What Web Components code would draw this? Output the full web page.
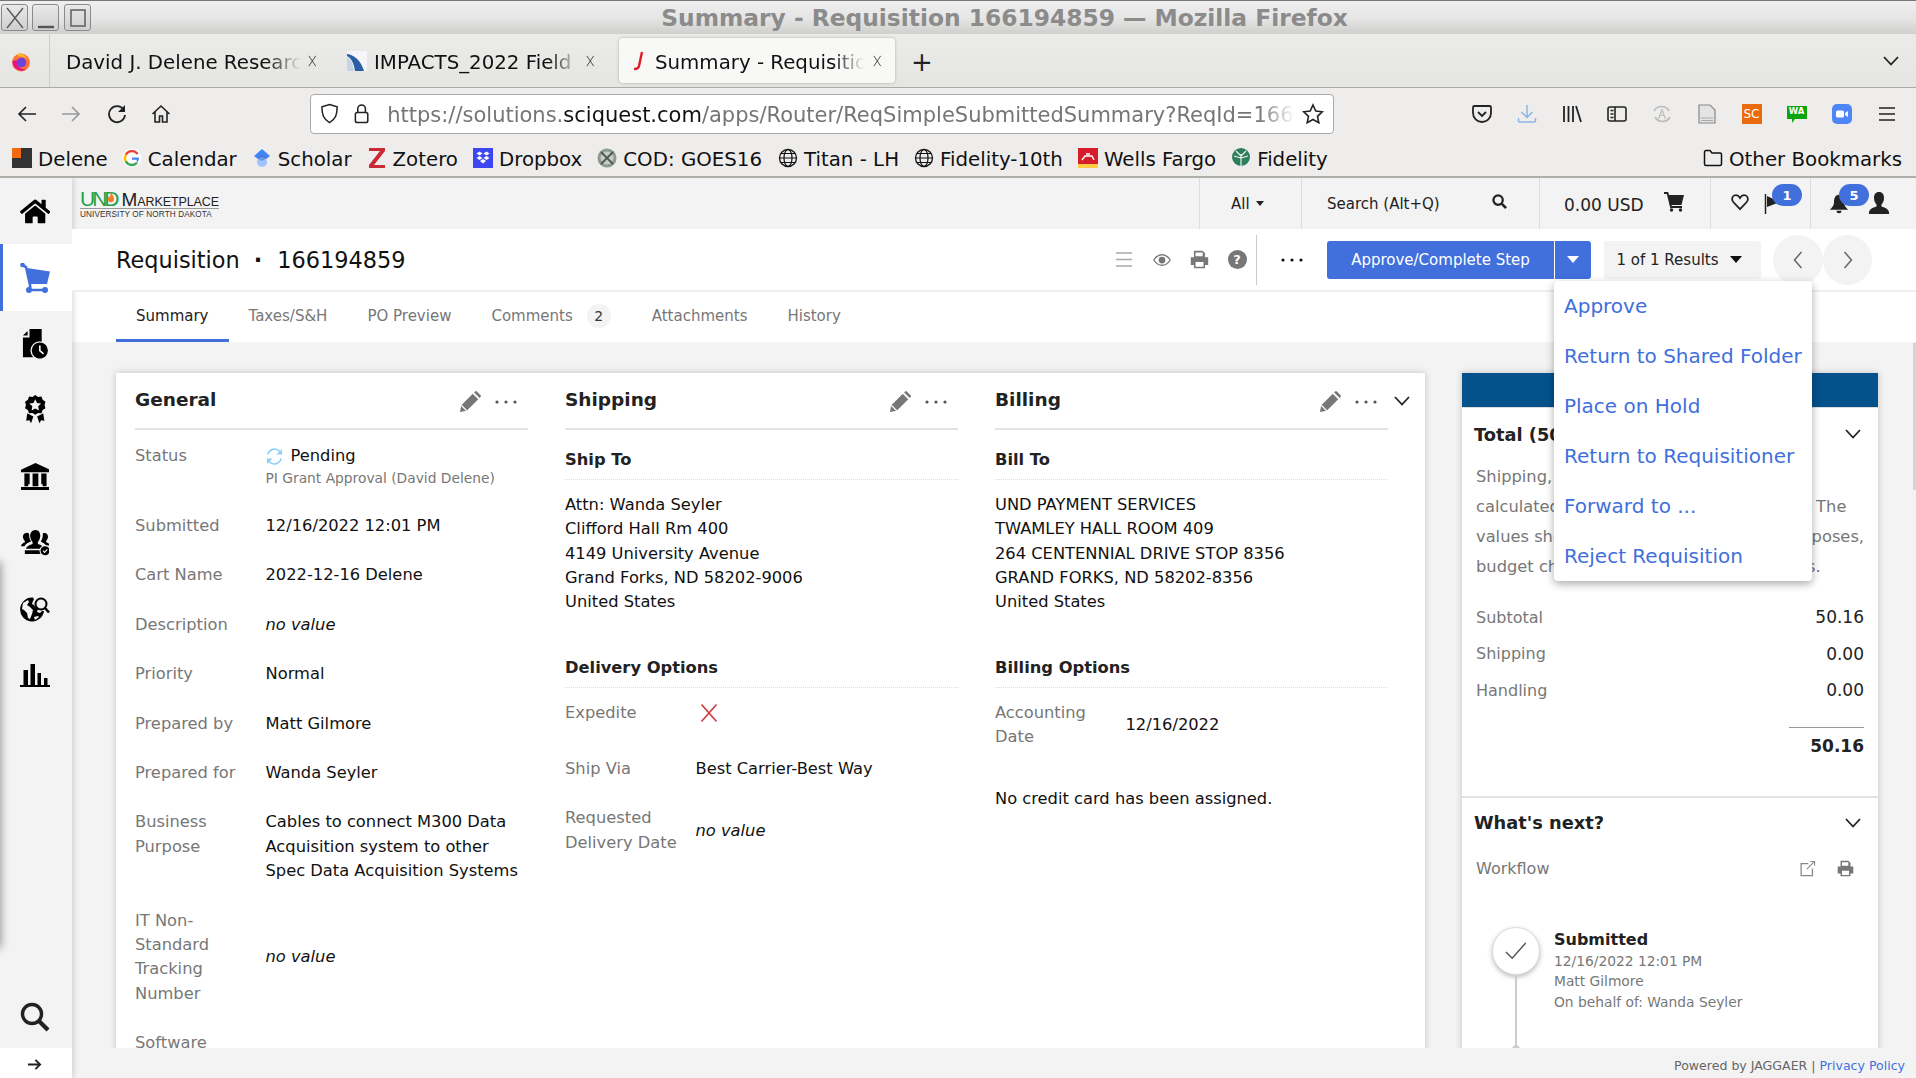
<!DOCTYPE html>
<html lang="en">
<head>
<meta charset="utf-8">
<title>Summary - Requisition 166194859</title>
<style>
  html, body { margin: 0; height: 100%; overflow: hidden; }
  body { font-family: "DejaVu Sans", sans-serif; font-size: 16.3px; color: #222; }
</style>
</head>
<body>
<moz-window>
  <win-titlebar>Summary - Requisition 166194859 — Mozilla Firefox</win-titlebar>
  <ff-tabs></ff-tabs>
  <ff-nav></ff-nav>
  <ff-bookmarks></ff-bookmarks>
  <app-shell>
    <app-sidebar slot="side"></app-sidebar>
    <app-header></app-header>
    <req-header></req-header>
    <req-tabs></req-tabs>
    <scroll-area>
      <summary-card>
        <card-column heading="General">
          <field-row label="Status">
            <status-pending></status-pending>
          </field-row>
          <field-row label="Submitted">12/16/2022 12:01 PM</field-row>
          <field-row label="Cart Name">2022-12-16 Delene</field-row>
          <field-row label="Description"><i>no value</i></field-row>
          <field-row label="Priority">Normal</field-row>
          <field-row label="Prepared by">Matt Gilmore</field-row>
          <field-row label="Prepared for">Wanda Seyler</field-row>
          <field-row label="Business Purpose">Cables to connect M300 Data Acquisition system to other Spec Data Acquisition Systems</field-row>
          <field-row label="IT Non-Standard Tracking Number" center><i>no value</i></field-row>
          <field-row label="Software"></field-row>
        </card-column>
        <card-column heading="Shipping">
          <sub-section heading="Ship To" first>
            Attn: Wanda Seyler<br>Clifford Hall Rm 400<br>4149 University Avenue<br>Grand Forks, ND 58202-9006<br>United States
          </sub-section>
          <sub-section heading="Delivery Options">
            <field-row label="Expedite"><x-icon name="cross" size="20" style="color:#d0393b;margin:2px 0 0 3px;padding-bottom:9px"></x-icon></field-row>
            <field-row label="Ship Via">Best Carrier-Best Way</field-row>
            <field-row label="Requested Delivery Date" center><i>no value</i></field-row>
          </sub-section>
        </card-column>
        <card-column heading="Billing">
          <sub-section heading="Bill To" first>
            UND PAYMENT SERVICES<br>TWAMLEY HALL ROOM 409<br>264 CENTENNIAL DRIVE STOP 8356<br>GRAND FORKS, ND 58202-8356<br>United States
          </sub-section>
          <sub-section heading="Billing Options">
            <field-row label="Accounting Date" center>12/16/2022</field-row>
            <div style="margin-top:37px">No credit card has been assigned.</div>
          </sub-section>
        </card-column>
      </summary-card>
      <totals-panel></totals-panel>
    </scroll-area>
    <app-footer></app-footer>
  </app-shell>
</moz-window>

<script>
// icon paths, all drawn with currentColor
const ICONS = {
  home: ['0 0 576 512', '<path fill="currentColor" d="M280.37 148.26L96 300.11V464a16 16 0 0 0 16 16l112.06-.29a16 16 0 0 0 15.92-16V368a16 16 0 0 1 16-16h64a16 16 0 0 1 16 16v95.64a16 16 0 0 0 16 16.05L464 480a16 16 0 0 0 16-16V300L295.67 148.26a12.19 12.19 0 0 0-15.3 0zM571.6 251.47L488 182.56V44.05a12 12 0 0 0-12-12h-56a12 12 0 0 0-12 12v72.61L318.47 43a48 48 0 0 0-61 0L4.34 251.47a12 12 0 0 0-1.6 16.9l25.5 31A12 12 0 0 0 45.15 301l235.22-193.74a12.19 12.19 0 0 1 15.3 0L530.9 301a12 12 0 0 0 16.9-1.6l25.5-31a12 12 0 0 0-1.7-16.93z"/>'],
  cart: ['0 0 30 30', '<path fill="currentColor" d="M7 5l23 3.5-3 12.5H10z"/><path d="M1.5 1.5L6 4l4 18 .5 5M9 27h16" fill="none" stroke="currentColor" stroke-width="2.6"/><circle cx="2.5" cy="2" r="2.3" fill="currentColor"/><circle cx="9" cy="27" r="3" fill="currentColor"/><circle cx="25" cy="27" r="3" fill="currentColor"/>'],
  docclock: ['0 0 28 32', '<path fill="currentColor" d="M1 7l5-5v5zM1 9h7V0h13v30H1z"/><circle cx="19" cy="23" r="10" fill="#f3f3f3"/><circle cx="19" cy="23" r="8.6" fill="currentColor"/><path d="M19 17.5V23l4 3.5" fill="none" stroke="#f3f3f3" stroke-width="1.8"/>'],
  award: ['0 0 24 32', '<path fill="currentColor" d="M12 0l3 2 3.6-.3 1.3 3.4 3 2-1 3.5 1 3.4-3 2-1.3 3.4-3.6-.3-3 2-3-2-3.6.3L4.1 16l-3-2 1-3.4-1-3.500 3-2 1.300-3.400L9 2z"/><path fill="#f3f3f3" d="M12 4.500l1.900 4 4.400.6-3.200 3 .8 4.300-3.900-2.100-3.900 2.100.8-4.300-3.200-3 4.400-.6z"/><path fill="currentColor" d="M3.500 19.500l5 2.500 1.500 1-2.500 7-1.700-3-3.500.5zM20.500 19.500l-5 2.500-1.500 1 2.500 7 1.700-3 3.500.5z"/>'],
  bank: ['0 0 30 28', '<path fill="currentColor" d="M15 0L30 7v2.500H0V7zM3.500 11H9v11H7.500v2H3.500zM12 11h6v13h-6zM21 11h5.500v13H22.500v-2H21zM0 25h30v3H0z"/>'],
  users: ['0 0 30 28', '<path fill="currentColor" d="M15 1c3.500 0 5 3 5 6 0 3-1.500 5.500-2.500 6.500v2c3 1 6 2 7 5H5c1-3 4-4 7-5v-2C11 12.500 9.500 10 9.500 7s2-6 5.500-6zM6.500 4C8 4 8.500 5 8.500 7c0 2.500 1 4.500 2 6-3 1-5.500 2-7 5H0c0-2.500 2.500-3.500 4-4.200v-1.300C3 11.500 2 9.500 2 8c0-2.500 2-4 4.500-4zM23.500 4C26 4 28 5.500 28 8c0 1.500-1 3.500-2 4.500v1c1.500.7 4 1.700 4 3.500h-4c-1.500-2-4-3.200-5.500-4 1-1.500 2-3.500 2-6 0-2 .5-3 1.500-3zM4 22h17v4H4z"/><circle cx="25" cy="22.500" r="5.800" fill="#f3f3f3"/><circle cx="25" cy="22.500" r="4.700" fill="currentColor"/><path d="M22.800 22.500l1.700 1.700 2.800-3" stroke="#f3f3f3" stroke-width="1.200" fill="none"/>'],
  globesearch: ['0 0 30 26', '<path fill="currentColor" d="M12 1.500A12 12 0 1 0 24 15h-2l-2 2-3-1 1-3a8 8 0 0 1-4-4l-2-1 1-3 1-1.500-1-2zM3 7l5-3 1 2-2 3 3 2 3 3-1 4-2 5-2-1-1-5-3-3-2-1zM14 21l4-1 1 1-4 3z"/><circle cx="21" cy="8" r="5.500" fill="none" stroke="currentColor" stroke-width="2"/><path d="M25 12l4 4.500" stroke="currentColor" stroke-width="2.600"/>'],
  chart: ['0 0 30 23', '<path fill="currentColor" d="M3.500 6h4.500v15H3.500zM10.500 0h4.500v21h-4.500zM17.500 9h3.500v12h-3.500zM24 14h3.500v7H24zM0 21h30v2H0z"/>'],
  search: ['0 0 30 30', '<circle cx="12" cy="12" r="9.500" fill="none" stroke="currentColor" stroke-width="3.400"/><path d="M19 19l9 9" stroke="currentColor" stroke-width="4.200"/>'],
  arrow: ['0 0 16 16', '<path d="M1 8h13M9 3l5 5-5 5" fill="none" stroke="currentColor" stroke-width="2"/>'],
  pencil: ['0 0 24 24', '<path fill="currentColor" d="M1 23l1.500-7.500L15 3l6 6L8.500 21.500zM16.500 1.500L17.500.500a1.500 1.500 0 0 1 2 0l4 4a1.500 1.500 0 0 1 0 2L22.500 7.500z"/><path d="M2.500 15.500l6 6" stroke="#fff" stroke-width="1.300"/>'],
  dots: ['0 0 22 4', '<circle cx="2" cy="2" r="1.600" fill="currentColor"/><circle cx="11" cy="2" r="1.600" fill="currentColor"/><circle cx="20" cy="2" r="1.600" fill="currentColor"/>'],
  close: ['0 0 10 14', '<path d="M1 1l8 12M9 1L1 13" stroke="currentColor" stroke-width="1" fill="none"/>'],
  printer: ['0 0 24 24', '<path fill="currentColor" d="M5 1h11l3 3v6H5zM1 9h22v10h-4v4H5v-4H1z"/><path fill="#fff" d="M7 3h9v5H7zM7 15h10v6H7z"/>'],
  eye: ['0 0 24 24', '<path d="M1 12c3-4.500 7-7 11-7s8 2.500 11 7c-3 4.500-7 7-11 7s-8-2.500-11-7z" fill="none" stroke="currentColor" stroke-width="1.700"/><circle cx="12" cy="12" r="4.500" fill="currentColor"/>'],
  lines: ['0 0 18 16', '<path d="M0 1h18M0 8h18M0 15h18" stroke="currentColor" stroke-width="1.700"/>'],
  external: ['0 0 24 24', '<path d="M13 5H3v17h16V12" fill="none" stroke="currentColor" stroke-width="1.800"/><path d="M11 13L22 2M16 2h6v6" fill="none" stroke="currentColor" stroke-width="1.500"/>'],
  chevron: ['0 0 16 10', '<path d="M1 1l7 7.500L15 1" fill="none" stroke="currentColor" stroke-width="1.800"/>'],
  left: ['0 0 10 18', '<path d="M8.500 1L1.500 9l7 8" fill="none" stroke="currentColor" stroke-width="1.500"/>'],
  right: ['0 0 10 18', '<path d="M1.500 1l7 8-7 8" fill="none" stroke="currentColor" stroke-width="1.500"/>'],
  cross: ['0 0 20 20', '<path d="M2.500 1.500l15 17M17.500 1.500l-15 17" fill="none" stroke="currentColor" stroke-width="1.600"/>'],
  sync: ['0 0 18 18', '<path d="M2 7a7.300 7.300 0 0 1 12.500-3.500L16 5M16 11a7.300 7.300 0 0 1-12.500 3.500L2 13" fill="none" stroke="currentColor" stroke-width="1.700"/><path fill="currentColor" d="M17 1v6h-6zM1 17v-6h6z"/>'],
  check: ['0 0 24 20', '<path d="M1 11l7 7L23 1" fill="none" stroke="currentColor" stroke-width="1.600"/>'],
  // header
  magnify: ['0 0 16 16', '<circle cx="6.500" cy="6.500" r="5" fill="none" stroke="currentColor" stroke-width="2.400"/><path d="M10.500 10.500l4.500 4.500" stroke="currentColor" stroke-width="2.800"/>'],
  shopcart: ['0 0 20 20', '<path fill="currentColor" d="M4 3h16l-2.500 10H6z"/><path d="M0 1h3.500L7 15h11" fill="none" stroke="currentColor" stroke-width="1.800"/><circle cx="7.500" cy="18" r="1.700" fill="currentColor"/><circle cx="16.500" cy="18" r="1.700" fill="currentColor"/>'],
  heart: ['0 0 20 20', '<path d="M10 18L2.500 10C.5 7.500 1 4 3.500 2.800 6 1.700 8.500 3 10 5.500 11.500 3 14 1.700 16.500 2.800 19 4 19.500 7.500 17.500 10z" fill="none" stroke="currentColor" stroke-width="2"/>'],
  flag: ['0 0 20 20', '<path d="M1.500 0v20" stroke="currentColor" stroke-width="1.500"/><path fill="currentColor" d="M3 2l13 6-13 5z"/>'],
  bell: ['0 0 24 24', '<path fill="currentColor" d="M12 1c5 0 6 5 6 9 0 4 2 6 5 9H1c3-3 5-5 5-9 0-4 1-9 6-9zM9 20h6a3 3 0 0 1-6 0z"/>'],
  user: ['0 0 20 22', '<path fill="currentColor" d="M10 0c3.500 0 5 2.500 5 6 0 3-1.500 5.500-2.500 6.500v2c3 1 6.500 2 7.500 5.500v2H0v-2c1-3.500 4.500-4.500 7.500-5.500v-2C6.500 11.500 5 9 5 6c0-3.500 1.500-6 5-6z"/>'],
  flame: ['0 0 10 14', '<path fill="#ef7d2b" d="M5 0c1 3 4 5 4 9a4 4 0 0 1-8 0c0-2 1-3 2-4 0 1 .5 2 1 2C4.500 5 4 2 5 0z"/>'],
  // browser chrome
  back: ['0 0 20 20', '<path d="M19 10H2M9 3l-7 7 7 7" fill="none" stroke="currentColor" stroke-width="1.600"/>'],
  forward: ['0 0 20 20', '<path d="M1 10h17M11 3l7 7-7 7" fill="none" stroke="currentColor" stroke-width="1.600"/>'],
  reload: ['0 0 20 20', '<path d="M16.500 5.500A8 8 0 1 0 18 11" fill="none" stroke="currentColor" stroke-width="1.800"/><path fill="currentColor" d="M18 1v7h-7z"/>'],
  house: ['0 0 20 20', '<path d="M1.500 10L10 2l8.500 8M4 8v10h4.500v-6h3v6H16V8" fill="none" stroke="currentColor" stroke-width="1.600"/>'],
  shield: ['0 0 20 22', '<path d="M10 1.500l8 2.500c0 8-1.500 13-8 16.500C3.500 17 2 12 2 4z" fill="none" stroke="currentColor" stroke-width="1.600"/>'],
  lock: ['0 0 18 22', '<path d="M5 10V6a4 4 0 0 1 8 0v4" fill="none" stroke="currentColor" stroke-width="1.600"/><rect x="2.500" y="10" width="13" height="10.500" rx="2" fill="none" stroke="currentColor" stroke-width="1.600"/>'],
  star: ['0 0 22 22', '<path d="M11 2l2.800 6 6.500.8-4.800 4.500 1.300 6.500L11 16.500 5.200 19.800l1.300-6.500L1.700 8.800 8.200 8z" fill="none" stroke="currentColor" stroke-width="1.600"/>'],
  pocket: ['0 0 20 20', '<path d="M2.500 2h15a1.500 1.500 0 0 1 1.500 1.500V9a9 9 0 0 1-18 0V3.500A1.500 1.500 0 0 1 2.500 2z" fill="none" stroke="currentColor" stroke-width="1.800"/><path d="M6 8l4 4 4-4" fill="none" stroke="currentColor" stroke-width="1.800"/>'],
  download: ['0 0 20 20', '<path d="M10 1v12M4.500 8l5.500 5.500L15.500 8M1.500 14v3a1 1 0 0 0 1 1h15a1 1 0 0 0 1-1v-3" fill="none" stroke="currentColor" stroke-width="1.500"/>'],
  library: ['0 0 20 20', '<path d="M2 2v16M6.500 2v16M11 2v16M14 2l5 16" fill="none" stroke="currentColor" stroke-width="1.800"/>'],
  sidebar: ['0 0 20 20', '<rect x="1" y="3" width="18" height="14" rx="2" fill="none" stroke="currentColor" stroke-width="1.600"/><path d="M8 3v14" stroke="currentColor" stroke-width="1.600"/><path d="M3.500 6.500h3M3.500 10h3M3.500 13.500h3" stroke="currentColor" stroke-width="1.500"/>'],
  syncA: ['0 0 20 20', '<path d="M2 7a8.500 8.500 0 0 1 15 0M18 13a8.500 8.500 0 0 1-15 0" fill="none" stroke="currentColor" stroke-width="1.600"/><path d="M6.500 15L10 5.500 13.500 15M8 11.500h4" fill="none" stroke="currentColor" stroke-width="1.100"/>'],
  page: ['0 0 18 20', '<path d="M1 1h11l5 5v13H1z" fill="#e4e4e4" stroke="#888" stroke-width="1.200"/><path d="M3 14h12M3 16.500h12" stroke="#aaa" stroke-width="1"/>'],
  menu: ['0 0 20 20', '<path d="M2 4h16M2 10h16M2 16h16" stroke="currentColor" stroke-width="1.700"/>'],
  globe: ['0 0 20 20', '<circle cx="10" cy="10" r="8.500" fill="none" stroke="currentColor" stroke-width="1.300"/><ellipse cx="10" cy="10" rx="4" ry="8.500" fill="none" stroke="currentColor" stroke-width="1.200"/><path d="M1.500 10h17M3 5.500h14M3 14.500h14" stroke="currentColor" stroke-width="1.100"/>'],
  folder: ['0 0 20 18', '<path d="M1.500 15V3a1.500 1.500 0 0 1 1.500-1.500h4L9 4h8a1.500 1.500 0 0 1 1.500 1.500V15a1.500 1.500 0 0 1-1.500 1.500H3A1.500 1.500 0 0 1 1.500 15z" fill="none" stroke="currentColor" stroke-width="1.500"/>'],
  // favicons
  delene: ['0 0 20 20', '<rect width="20" height="20" fill="#333"/><rect width="9" height="10" fill="#f26a0f"/>'],
  google: ['0 0 20 20', '<circle cx="10" cy="10" r="9.500" fill="#fff"/><path d="M15.600 6A7 7 0 0 0 3.800 6.700" fill="none" stroke="#ea4335" stroke-width="2.400"/><path d="M3.800 6.700a7 7 0 0 0 0 6.600" fill="none" stroke="#fbbc05" stroke-width="2.400"/><path d="M3.800 13.300a7 7 0 0 0 11.200 1.600" fill="none" stroke="#34a853" stroke-width="2.400"/><path d="M15 14.900A7 7 0 0 0 17 9.500H10v2.200h4.500" fill="#4285f4"/>'],
  scholar: ['0 0 20 20', '<path fill="#4285f4" d="M10 1l8 7-8 6-8-6z"/><circle cx="10" cy="14" r="5" fill="#a0c3ff"/><path fill="#356ac3" d="M5 10l5-3 5 3-5 3z" opacity=".5"/>'],
  zotero: ['0 0 20 20', '<path fill="#cc2936" d="M2 0h16v3L7 17h11v3H2v-3L13 3H2z"/>'],
  dropbox: ['0 0 20 20', '<rect width="20" height="20" fill="#3d46f2"/><path fill="#fff" d="M6.500 3.500l3 2-3 2-3-2zM13.500 3.500l3 2-3 2-3-2zM6.500 8l3 2-3 2-3-2zM13.500 8l3 2-3 2-3-2zM10 11l3 2-3 2.500-3-2.500z"/>'],
  cod: ['0 0 20 20', '<circle cx="10" cy="10" r="9.500" fill="#8d9a8f"/><circle cx="10" cy="10" r="6.500" fill="#c6cdc6"/><path d="M4 4l12 12M16 4L4 16" stroke="#4d5a50" stroke-width="1.800"/>'],
  wells: ['0 0 20 20', '<rect width="20" height="16" fill="#d71e28"/><rect y="16" width="20" height="4" fill="#ffcd41"/><path d="M4 12l3-4h7l2 4M8 6h4" stroke="#fff" stroke-width="1.400" fill="none"/>'],
  fidelity: ['0 0 20 20', '<circle cx="10" cy="9" r="9" fill="#2e7d5b"/><path d="M10 6v14M10 8L5 3M10 8l5-5M10 10L3 8M10 10l7-2" stroke="#e8f2ee" stroke-width="1.200"/>'],
  firefox: ['0 0 20 20', '<circle cx="10" cy="10.500" r="9" fill="#ff7139"/><path fill="#e31587" d="M1.500 9a9 9 0 0 0 14 8C9 18 5 13 6 8z"/><circle cx="10.500" cy="10.500" r="4.800" fill="#6e44d8"/><path fill="#ffbd2e" d="M7 1c4 0 8 3 9 6-2-2-5-3-9-2z"/>'],
  impacts: ['0 0 20 20', '<rect width="20" height="20" fill="#f4f6fa"/><path d="M0 3c8 1 14 7 17 17H8C7 12 4 7 0 5z" fill="#2a5fa4"/><path d="M0 6c4 2 6 6 7 14H0z" fill="#c7d4e8"/>'],
  jaggaer: ['0 0 14 20', '<path d="M10 1L7 15c-.4 2-2 3-5 3" fill="none" stroke="#e01b24" stroke-width="2.400"/>'],
  zoomapp: ['0 0 20 20', '<rect width="20" height="20" rx="5" fill="#4f86f7"/><rect x="4" y="6.500" width="8" height="7" rx="1.500" fill="#fff"/><path fill="#fff" d="M13 9l3-2v6l-3-2z"/>'],
  wa: ['0 0 20 20', '<path fill="#0da50d" d="M0 2h20v13H8l-3 4v-4H0z"/>']
};

// small helper, every element just clones its template into an open shadow root
function define(name, html, init) {
  const template = document.createElement('template');
  template.innerHTML = html;
  customElements.define(name, class extends HTMLElement {
    constructor() {
      super();
      this.attachShadow({ mode: 'open' });
      this.shadowRoot.appendChild(template.content.cloneNode(true));
      if (init) init(this, this.shadowRoot);
    }
  });
}

class XIcon extends HTMLElement {
  constructor() {
    super();
    this.attachShadow({ mode: 'open' });
  }
  connectedCallback() {
    const [box, body] = ICONS[this.getAttribute('name')];
    const parts = box.split(' ');
    const h = Number(this.getAttribute('size') || 20);
    const w = this.getAttribute('width') || h * parts[2] / parts[3];
    this.shadowRoot.innerHTML = `<style>:host{display:inline-flex;flex:none;line-height:0}</style>
      <svg xmlns="http://www.w3.org/2000/svg" viewBox="${box}" width="${w}" height="${h}">${body}</svg>`;
  }
}
customElements.define('x-icon', XIcon);

define('moz-window', `<style>
  :host { display: flex; flex-direction: column; width: 1916px; height: 1078px; overflow: hidden; background: #ececea; }
</style><slot></slot>`);

define('win-titlebar', `<style>
  :host { display: flex; align-items: center; height: 33px; flex: none; position: relative; border-top: 1px solid #777;
    background: linear-gradient(#efefef, #e6e6e6 50%, #cfcfcd); }
  .btns { display: flex; gap: 4px; padding-left: 1px; }
  .btn { width: 27px; height: 27px; box-sizing: border-box; border: 1px solid #8a8a8a; border-radius: 3px; background: linear-gradient(#e9e9e9, #cfcfcf); display: flex; align-items: center; justify-content: center; }
  .t { flex: 1; text-align: center; font: bold 23.350px "DejaVu Sans", sans-serif; color: #8b8b8b; white-space: nowrap; padding-left: 2px; }
</style>
<div class="btns">
  <div class="btn"><svg width="20" height="22"><path d="M2 1l16 20M18 1L2 21" stroke="#555" stroke-width="1.300" fill="none"/></svg></div>
  <div class="btn"><svg width="20" height="22"><path d="M2 20h16" stroke="#555" stroke-width="2.400"/></svg></div>
  <div class="btn" style="margin-left:1px"><svg width="20" height="22"><rect x="3" y="3" width="14" height="16" fill="none" stroke="#666" stroke-width="1.600"/></svg></div>
</div>
<div class="t"><slot></slot></div>`);

define('ff-tab', `<style>
  :host { display: flex; align-items: center; height: 45px; width: 276px; flex: none; box-sizing: border-box; padding: 0 10px 0 15px; gap: 7px; font-size: 19.800px; color: #111; border-radius: 4px; }
  :host([active]) { background: #f8f8f7; box-shadow: 0 0 3px #0004; padding: 0 13px 0 13px; gap: 9px; }
  .l { flex: 1; overflow: hidden; white-space: nowrap; padding-top: 3px; -webkit-mask-image: linear-gradient(90deg, #000 85%, transparent); mask-image: linear-gradient(90deg, #000 85%, transparent); }
  .x { color: #333; margin-top: 1px; }
</style><slot name="icon"></slot><span class="l"><slot></slot></span><x-icon class="x" name="close" size="12"></x-icon>`);

define('ff-tabs', `<style>
  :host { display: flex; align-items: center; height: 54px; flex: none; box-sizing: border-box; border-bottom: 1px solid #aaa; background: linear-gradient(#ebebe9, #e5e5e3); }
  .ff { width: 50px; height: 100%; display: flex; align-items: center; justify-content: center; border-right: 1px solid #ccc; box-sizing: border-box; margin-right: 1px; padding: 3px 8px 0 0; }
  .plus { font-size: 26px; margin-left: 16px; color: #222; padding-top: 2px; }
  .more { margin-left: auto; margin-right: 17px; color: #222; }
</style>
<div class="ff"><x-icon name="firefox" size="20"></x-icon></div>
<ff-tab>David J. Delene Research Group</ff-tab>
<ff-tab style="margin:0 14px 0 0;width:278px;padding-left:20px"><x-icon slot="icon" name="impacts" size="20"></x-icon>IMPACTS_2022 Field Catalog</ff-tab>
<ff-tab active><x-icon slot="icon" name="jaggaer" size="20"></x-icon>Summary - Requisition 166194859</ff-tab>
<span class="plus">+</span>
<x-icon class="more" name="chevron" size="10"></x-icon>`);

define('ff-nav', `<style>
  :host { display: flex; align-items: center; height: 52px; flex: none; background: #eeedec; }
  .b { width: 44px; display: flex; justify-content: center; color: #222; }
  .left { display: flex; padding-left: 5px; width: 310px; box-sizing: border-box; }
  .url { width: 1024px; height: 40px; box-sizing: border-box; margin-top: -1px; background: #fff; border: 1px solid #aaa; border-radius: 4px; display: flex; align-items: center; color: #222; padding: 0 9px 0 9px; font-size: 21px; }
  .txt { flex: 1; margin-left: 17px; padding-top: 2px; overflow: hidden; white-space: nowrap; color: #757575; -webkit-mask-image: linear-gradient(90deg, #000 96%, transparent); mask-image: linear-gradient(90deg, #000 96%, transparent); }
  .txt b { font-weight: normal; color: #111; }
  .tools { flex: 1; display: flex; justify-content: flex-end; padding-right: 7px; }
  .t { width: 45px; display: flex; justify-content: center; align-items: center; color: #222; }
  .sc { width: 20px; height: 20px; background: #ea6a0e; color: #fff; font-size: 12px; display: flex; align-items: center; justify-content: center; }
  .wa { position: relative; width: 20px; height: 20px; }
  .wa span { position: absolute; left: 0; right: 0; top: 2px; text-align: center; font-size: 8.500px; font-weight: bold; color: #fff; }
</style>
<div class="left">
  <div class="b"><x-icon name="back" size="20"></x-icon></div>
  <div class="b" style="color:#999"><x-icon name="forward" size="20"></x-icon></div>
  <div class="b" style="margin-left:2px"><x-icon name="reload" size="20"></x-icon></div>
  <div class="b"><x-icon name="house" size="20"></x-icon></div>
</div>
<div class="url">
  <x-icon name="shield" size="21"></x-icon>
  <x-icon name="lock" size="21" style="margin-left:14px"></x-icon>
  <div class="txt">https://solutions.<b>sciquest.com</b>/apps/Router/ReqSimpleSubmittedSummary?ReqId=166194859</div>
  <x-icon name="star" size="22" style="margin-left:7px"></x-icon>
</div>
<div class="tools">
  <div class="t"><x-icon name="pocket" size="20"></x-icon></div>
  <div class="t" style="color:#8fb4e3"><x-icon name="download" size="20"></x-icon></div>
  <div class="t"><x-icon name="library" size="20"></x-icon></div>
  <div class="t"><x-icon name="sidebar" size="20"></x-icon></div>
  <div class="t" style="color:#bbb"><x-icon name="syncA" size="20"></x-icon></div>
  <div class="t"><x-icon name="page" size="20"></x-icon></div>
  <div class="t"><span class="sc">SC</span></div>
  <div class="t"><span class="wa"><x-icon name="wa" size="20"></x-icon><span>WA</span></span></div>
  <div class="t"><x-icon name="zoomapp" size="20"></x-icon></div>
  <div class="t"><x-icon name="menu" size="20"></x-icon></div>
</div>`);

define('ff-bm', `<style>
  :host { display: inline-flex; align-items: center; gap: 6px; font-size: 19.800px; color: #111; white-space: nowrap; }
  span { padding-top: 2px; }
</style><slot name="icon"></slot><span><slot></slot></span>`);

define('ff-bookmarks', `<style>
  :host { display: flex; align-items: center; gap: 15px; height: 38px; flex: none; box-sizing: border-box; padding: 0 14px 0 12px; background: #eeedec; border-bottom: 2px solid #b0aea9; }
  .end { margin-left: auto; }
</style>
<ff-bm><x-icon slot="icon" name="delene" size="20"></x-icon>Delene</ff-bm>
<ff-bm style="margin-left:-1px"><x-icon slot="icon" name="google" size="20"></x-icon>Calendar</ff-bm>
<ff-bm><x-icon slot="icon" name="scholar" size="20"></x-icon>Scholar</ff-bm>
<ff-bm><x-icon slot="icon" name="zotero" size="20"></x-icon>Zotero</ff-bm>
<ff-bm><x-icon slot="icon" name="dropbox" size="20"></x-icon>Dropbox</ff-bm>
<ff-bm><x-icon slot="icon" name="cod" size="20"></x-icon>COD: GOES16</ff-bm>
<ff-bm style="margin-left:1px"><x-icon slot="icon" name="globe" size="20"></x-icon>Titan - LH</ff-bm>
<ff-bm><x-icon slot="icon" name="globe" size="20"></x-icon>Fidelity-10th</ff-bm>
<ff-bm><x-icon slot="icon" name="wells" size="20"></x-icon>Wells Fargo</ff-bm>
<ff-bm><x-icon slot="icon" name="fidelity" size="20"></x-icon>Fidelity</ff-bm>
<ff-bm class="end"><x-icon slot="icon" name="folder" size="18"></x-icon>Other Bookmarks</ff-bm>`);

define('app-shell', `<style>
  :host { display: grid; grid-template-columns: 72px 1fr; flex: 1; min-height: 0; position: relative; }
  .main { display: flex; flex-direction: column; min-width: 0; min-height: 0; }
  .side { display: flex; z-index: 3; min-height: 0; }
  .bar { position: absolute; right: 0; top: 165px; width: 3px; height: 147px; background: #d4d4d4; z-index: 5; }
</style>
<div class="side"><slot name="side"></slot></div>
<div class="main"><slot></slot></div>
<div class="bar"></div>`);

define('side-item', `<style>
  :host { display: flex; align-items: center; justify-content: center; height: 66.200px; flex: none; color: #000; box-sizing: border-box; padding-right: 2px; }
  :host([active]) { background: #fff; border-left: 3px solid #4170dd; padding-right: 5px; color: #4170dd; height: 67px; }
</style><slot></slot>`);

define('app-sidebar', `<style>
  :host { display: flex; flex-direction: column; width: 72px; background: #f3f3f3; box-shadow: 2px 0 5px #0002; position: relative; overflow: visible; clip-path: inset(0 -10px 0 0); }
  .grow { flex: 1; display: flex; align-items: flex-end; justify-content: center; padding: 0 2px 16px 0; }
  .arrow { height: 30px; flex: none; background: #fff; display: flex; align-items: center; justify-content: center; padding: 3px 4px 0 0; box-sizing: border-box; }
  .shade { position: absolute; left: -6px; top: 385px; width: 6px; height: 384px; box-shadow: 0 0 9px 1px #0006; }
</style>
<side-item><x-icon name="home" size="27"></x-icon></side-item>
<side-item active><x-icon name="cart" size="30"></x-icon></side-item>
<side-item><x-icon name="docclock" size="30"></x-icon></side-item>
<side-item><x-icon name="award" size="30"></x-icon></side-item>
<side-item><x-icon name="bank" size="27"></x-icon></side-item>
<side-item><x-icon name="users" size="27"></x-icon></side-item>
<side-item><x-icon name="globesearch" size="26"></x-icon></side-item>
<side-item><x-icon name="chart" size="23"></x-icon></side-item>
<div class="grow"><x-icon name="search" size="30"></x-icon></div>
<div class="arrow"><x-icon name="arrow" size="15"></x-icon></div>
<div class="shade"></div>`);

define('app-header', `<style>
  :host { display: flex; height: 51px; flex: none; background: #f3f3f3; align-items: stretch; font-size: 15px; color: #222; }
  .logo { width: 1127px; flex: none; box-sizing: border-box; padding: 9px 0 0 8px; }
  .und { display: flex; align-items: baseline; height: 20px; white-space: nowrap; position: relative; }
  .und b { font: 21px "Liberation Sans", sans-serif; color: #1aa34a; letter-spacing: -3px; }
  .und x-icon { position: absolute; left: 27px; top: 5px; }
  .und span { font: 19px "Liberation Sans", sans-serif; color: #222; margin-left: 5px; }
  .und em { font: 12.500px "Liberation Sans", sans-serif; color: #222; letter-spacing: -.1px; }
  .uni { font: 8.200px "Liberation Sans", sans-serif; color: #333; border-top: 1px solid #999; width: 139px; margin-top: 1px; padding-top: 1px; letter-spacing: .1px; white-space: nowrap; }
  .c { display: flex; align-items: center; border-left: 1px solid #ddd; box-sizing: border-box; position: relative; }
  .caret { width: 0; height: 0; border: 4px solid transparent; border-top: 5px solid #222; border-bottom: 0; margin-left: 6px; }
  .badge { position: absolute; width: 30px; height: 22px; border-radius: 11px; background: #4170dd; color: #fff; font-size: 13px; font-weight: bold; display: flex; align-items: center; justify-content: center; }
</style>
<div class="logo">
  <div class="und"><b>UND</b><x-icon name="flame" size="11"></x-icon><span>M</span><em>ARKETPLACE</em></div>
  <div class="uni">UNIVERSITY OF NORTH DAKOTA</div>
</div>
<div class="c" style="width:102px;padding-left:31px">All<span class="caret"></span></div>
<div class="c" style="width:238px;padding-left:25px">Search (Alt+Q)<x-icon name="magnify" size="15" style="margin-left:52px;margin-top:-4px"></x-icon></div>
<div class="c" style="width:171px;padding-left:24px;font-size:17px"><span style="margin-top:2px">0.00 USD</span><x-icon name="shopcart" size="20" style="margin-left:20px;margin-top:-3px"></x-icon></div>
<div class="c" style="width:100px">
  <x-icon name="heart" size="18" style="margin-left:20px;margin-top:-3px"></x-icon>
  <x-icon name="flag" size="20" style="margin-left:15px"></x-icon>
  <span class="badge" style="left:61px;top:6px">1</span>
</div>
<div class="c" style="width:106px">
  <x-icon name="bell" size="20" style="margin-left:18px"></x-icon>
  <x-icon name="user" size="22" style="margin-left:20px;margin-top:-1px"></x-icon>
  <span class="badge" style="left:28px;top:6px">5</span>
</div>`);

define('drop-menu', `<style>
  :host { display: block; position: absolute; left: 0; top: 40px; width: 258px; height: 300px; background: #fff; border-radius: 4px; box-shadow: 0 3px 8px #0005; z-index: 20; }
  div { height: 50px; box-sizing: border-box; padding: 1px 0 0 10px; display: flex; align-items: center; font-size: 20px; color: #3f6fdc; white-space: nowrap; }
</style>
<div>Approve</div>
<div>Return to Shared Folder</div>
<div>Place on Hold</div>
<div>Return to Requisitioner</div>
<div>Forward to ...</div>
<div>Reject Requisition</div>`);

define('req-header', `<style>
  :host { display: flex; align-items: center; height: 63px; flex: none; box-sizing: border-box; padding: 0 44px; background: #fff; border-bottom: 2px solid #eee; position: relative; z-index: 10; }
  .title { font-size: 22.400px; color: #111; white-space: nowrap; display: flex; }
  .title span { margin: 0 15px 0 14px; font-weight: bold; }
  .acts { margin-left: auto; display: flex; align-items: center; }
  .i { width: 38px; display: flex; justify-content: center; color: #777; }
  .sep { width: 1px; height: 50px; background: #ccc; }
  .dots { width: 70px; display: flex; justify-content: center; color: #111; }
  .q { width: 19px; height: 19px; border-radius: 50%; background: #777; color: #fff; font-size: 13px; font-weight: bold; display: flex; align-items: center; justify-content: center; }
  .split { display: flex; position: relative; height: 38px; color: #fff; font-size: 15px; }
  .m { width: 227px; background: #4170dd; border-radius: 3px 0 0 3px; display: flex; align-items: center; justify-content: center; }
  .c { width: 36px; margin-left: 1px; background: #4170dd; border-radius: 0 3px 3px 0; display: flex; align-items: center; justify-content: center; }
  .c i, .r i { width: 0; height: 0; border: 6px solid transparent; border-top: 7px solid #fff; border-bottom: 0; }
  .r { margin-left: 13px; width: 157px; height: 38px; box-sizing: border-box; padding-right: 7px; background: #f3f3f3; border-radius: 3px; display: flex; align-items: center; justify-content: center; gap: 11px; font-size: 15px; color: #222; }
  .r i { border-top-color: #111; }
  .n { width: 50px; height: 50px; border-radius: 50%; background: #f3f3f3; display: flex; align-items: center; justify-content: center; color: #666; }
</style>
<div class="title">Requisition<span>·</span>166194859</div>
<div class="acts">
  <div class="i" style="color:#a8a8a8;padding-left:2px;box-sizing:border-box"><x-icon name="lines" size="15"></x-icon></div>
  <div class="i" style="padding-left:2px;box-sizing:border-box"><x-icon name="eye" size="18"></x-icon></div>
  <div class="i"><x-icon name="printer" size="19"></x-icon></div>
  <div class="i"><span class="q">?</span></div>
  <div class="sep"></div>
  <div class="dots"><x-icon name="dots" size="4"></x-icon></div>
  <div class="split">
    <div class="m">Approve/Complete Step</div>
    <div class="c"><i></i></div>
    <drop-menu style="left:227px"></drop-menu>
  </div>
  <div class="r">1 of 1 Results<i></i></div>
  <div class="n" style="margin-left:12px"><x-icon name="left" size="18"></x-icon></div>
  <div class="n" style="width:49px"><x-icon name="right" size="18"></x-icon></div>
</div>`);

define('req-tabs', `<style>
  :host { display: flex; height: 50px; flex: none; box-sizing: border-box; padding-left: 44px; background: #fff; font-size: 15px; color: #777; }
  div { padding: 0 20px 3px; display: flex; align-items: center; box-sizing: border-box; }
  .on { color: #222; border-bottom: 3px solid #4170dd; padding-bottom: 0; }
  .c { width: 24px; height: 24px; border-radius: 50%; background: #f3f3f3; color: #333; display: flex; align-items: center; justify-content: center; margin-left: 14px; font-size: 14px; }
</style>
<div class="on">Summary</div>
<div>Taxes/S&amp;H</div>
<div>PO Preview</div>
<div style="padding-right:21px">Comments<span class="c">2</span></div>
<div>Attachments</div>
<div>History</div>`);

define('scroll-area', `<style>
  :host { display: flex; flex: 1; min-height: 0; overflow: hidden; box-sizing: border-box; padding: 31px 0 0 44px; gap: 37px; background: #f3f3f3; align-items: flex-start; }
</style><slot></slot>`);

define('summary-card', `<style>
  :host { display: grid; grid-template-columns: 393px 393px 393px; gap: 37px; width: 1309px; flex: none; box-sizing: border-box; padding: 0 0 0 19px; background: #fff; box-shadow: 0 0 7px #0003; position: relative; min-height: 720px; }
  x-icon { position: absolute; right: 15px; top: 23px; color: #222; }
</style><slot></slot><x-icon name="chevron" size="10"></x-icon>`);

define('card-column', `<style>
  :host { display: block; min-width: 0; }
  .h { display: flex; align-items: center; height: 57px; box-sizing: border-box; border-bottom: 2px solid #e2e2e2; padding-bottom: 3px; }
  h2 { flex: 1; margin: 0; font-size: 18.500px; color: #222; }
  .dots { color: #555; margin: 5px 11px 0 0; }
  .p { color: #777; margin: 5px 14px 0 0; }
  .b { padding-top: 14px; }
  :host([heading="Shipping"]) .b, :host([heading="Billing"]) .b { padding-top: 0; }
</style>
<div class="h"><h2></h2><x-icon class="p" name="pencil" size="22"></x-icon><x-icon class="dots" name="dots" size="4"></x-icon></div>
<div class="b"><slot></slot></div>`, (el, root) => {
  root.querySelector('h2').textContent = el.getAttribute('heading');
});

define('sub-section', `<style>
  :host { display: block; margin-top: 41.500px; line-height: 24.300px; color: #111; }
  :host([first]) { margin-top: 18px; }
  h3 { margin: 0; height: 24px; font-size: 16.300px; line-height: 24px; color: #222; }
  .r { border-top: 1px dotted #ddd; margin: 7px 0 13px; }
</style>
<h3></h3><div class="r"></div><slot></slot>`, (el, root) => {
  root.querySelector('h3').textContent = el.getAttribute('heading');
});

define('field-row', `<style>
  :host { display: grid; grid-template-columns: 130.500px 1fr; margin-bottom: 25px; line-height: 24.400px; color: #111; }
  .l { color: #777; padding-right: 16px; }
  :host([center]) .v { align-self: center; }
</style><div class="l"></div><div class="v"><slot></slot></div>`, (el, root) => {
  root.querySelector('.l').textContent = el.getAttribute('label');
});

define('status-pending', `<style>
  :host { display: block; }
  .s { display: flex; align-items: center; gap: 8px; }
  x-icon { color: #8fd0f7; }
  small { display: block; font-size: 13.800px; line-height: 20.600px; color: #777; }
</style>
<div class="s"><x-icon name="sync" size="17"></x-icon>Pending</div>
<small>PI Grant Approval (David Delene)</small>`);

define('money-row', `<style>
  :host { display: flex; justify-content: space-between; align-items: center; height: 36.500px; color: #777; }
  span { font-size: 17px; color: #222; }
</style><slot></slot><span></span>`, (el, root) => {
  root.querySelector('span').textContent = el.getAttribute('value');
});

define('totals-panel', `<style>
  :host { display: block; width: 416px; flex: none; background: #fff; box-shadow: 0 0 7px #0003; min-height: 720px; font-size: 16px; }
  .top { height: 35px; background: #03528c; border-bottom: 1px solid #ddd; box-sizing: border-box; }
  .sec { padding: 0 14px; }
  .head { display: flex; align-items: center; justify-content: space-between; height: 52px; font-size: 17.800px; font-weight: bold; color: #222; padding-right: 2px; }
  .head b { margin-left: -2px; }
  .head x-icon { margin-right: 1px; }
  .note { color: #777; font-size: 16.300px; line-height: 30px; white-space: nowrap; margin-top: 2px; height: 119px; }
  .rows { margin-top: 18px; }
  .rule { width: 75px; border-top: 1px solid #999; margin: 18px 0 6px auto; }
  .tot { height: 24px; line-height: 24px; text-align: right; font-size: 17px; font-weight: bold; color: #222; }
  .line { border-top: 2px solid #e2e2e2; margin-top: 38px; }
  .wf { display: flex; align-items: center; height: 24px; margin-top: 9px; color: #777; }
  .wf x-icon:first-of-type { margin-left: auto; }
  .step { display: flex; margin: 47px 0 0 16px; gap: 14px; }
  .pin { display: flex; flex-direction: column; align-items: center; width: 48px; flex: none; margin-top: -1px; }
  .dot { width: 48px; height: 48px; box-sizing: border-box; border-radius: 50%; border: 1px solid #ddd; box-shadow: 0 2px 5px #0004; display: flex; align-items: center; justify-content: center; color: #555; background: #fff; }
  .stem { width: 2px; height: 70px; background: #ccc; margin-top: 1px; }
  .tip { width: 6px; height: 6px; background: #ccc; transform: rotate(45deg); margin-top: -1px; }
  .who b { display: block; font-size: 16px; line-height: 23px; color: #222; }
  .who div { font-size: 13.800px; line-height: 20.800px; color: #777; white-space: nowrap; }
</style>
<div class="top"></div>
<div class="sec">
  <div class="head"><b>Total (50.16 USD)</b><x-icon name="chevron" size="10"></x-icon></div>
  <div class="note">Shipping, handling and tax charges are<br>calculated and charged by each supplier. The<br>values shown here are for estimation purposes,<br>budget checking, and workflow approvals.</div>
  <div class="rows">
    <money-row value="50.16">Subtotal</money-row>
    <money-row value="0.00">Shipping</money-row>
    <money-row value="0.00">Handling</money-row>
  </div>
  <div class="rule"></div>
  <div class="tot">50.16</div>
</div>
<div class="line"></div>
<div class="sec">
  <div class="head" style="height:50px"><b>What's next?</b><x-icon name="chevron" size="10"></x-icon></div>
  <div class="wf">Workflow
    <x-icon name="external" size="17" style="color:#888;margin-right:21px"></x-icon>
    <x-icon name="printer" size="17" style="color:#777;margin-right:10px"></x-icon>
  </div>
  <div class="step">
    <div class="pin"><div class="dot"><x-icon name="check" size="18"></x-icon></div><div class="stem"></div><div class="tip"></div></div>
    <div class="who"><b>Submitted</b><div>12/16/2022 12:01 PM</div><div>Matt Gilmore</div><div>On behalf of: Wanda Seyler</div></div>
  </div>
</div>`);

define('app-footer', `<style>
  :host { display: flex; align-items: center; justify-content: flex-end; height: 30px; flex: none; padding: 4px 11px 0 0; box-sizing: border-box; background: #f3f3f3; font-size: 12.550px; color: #666; position: relative; z-index: 2; white-space: pre; }
  a { color: #4170dd; }
</style>Powered by JAGGAER | <a>Privacy Policy</a>`);
</script>
</body>
</html>
